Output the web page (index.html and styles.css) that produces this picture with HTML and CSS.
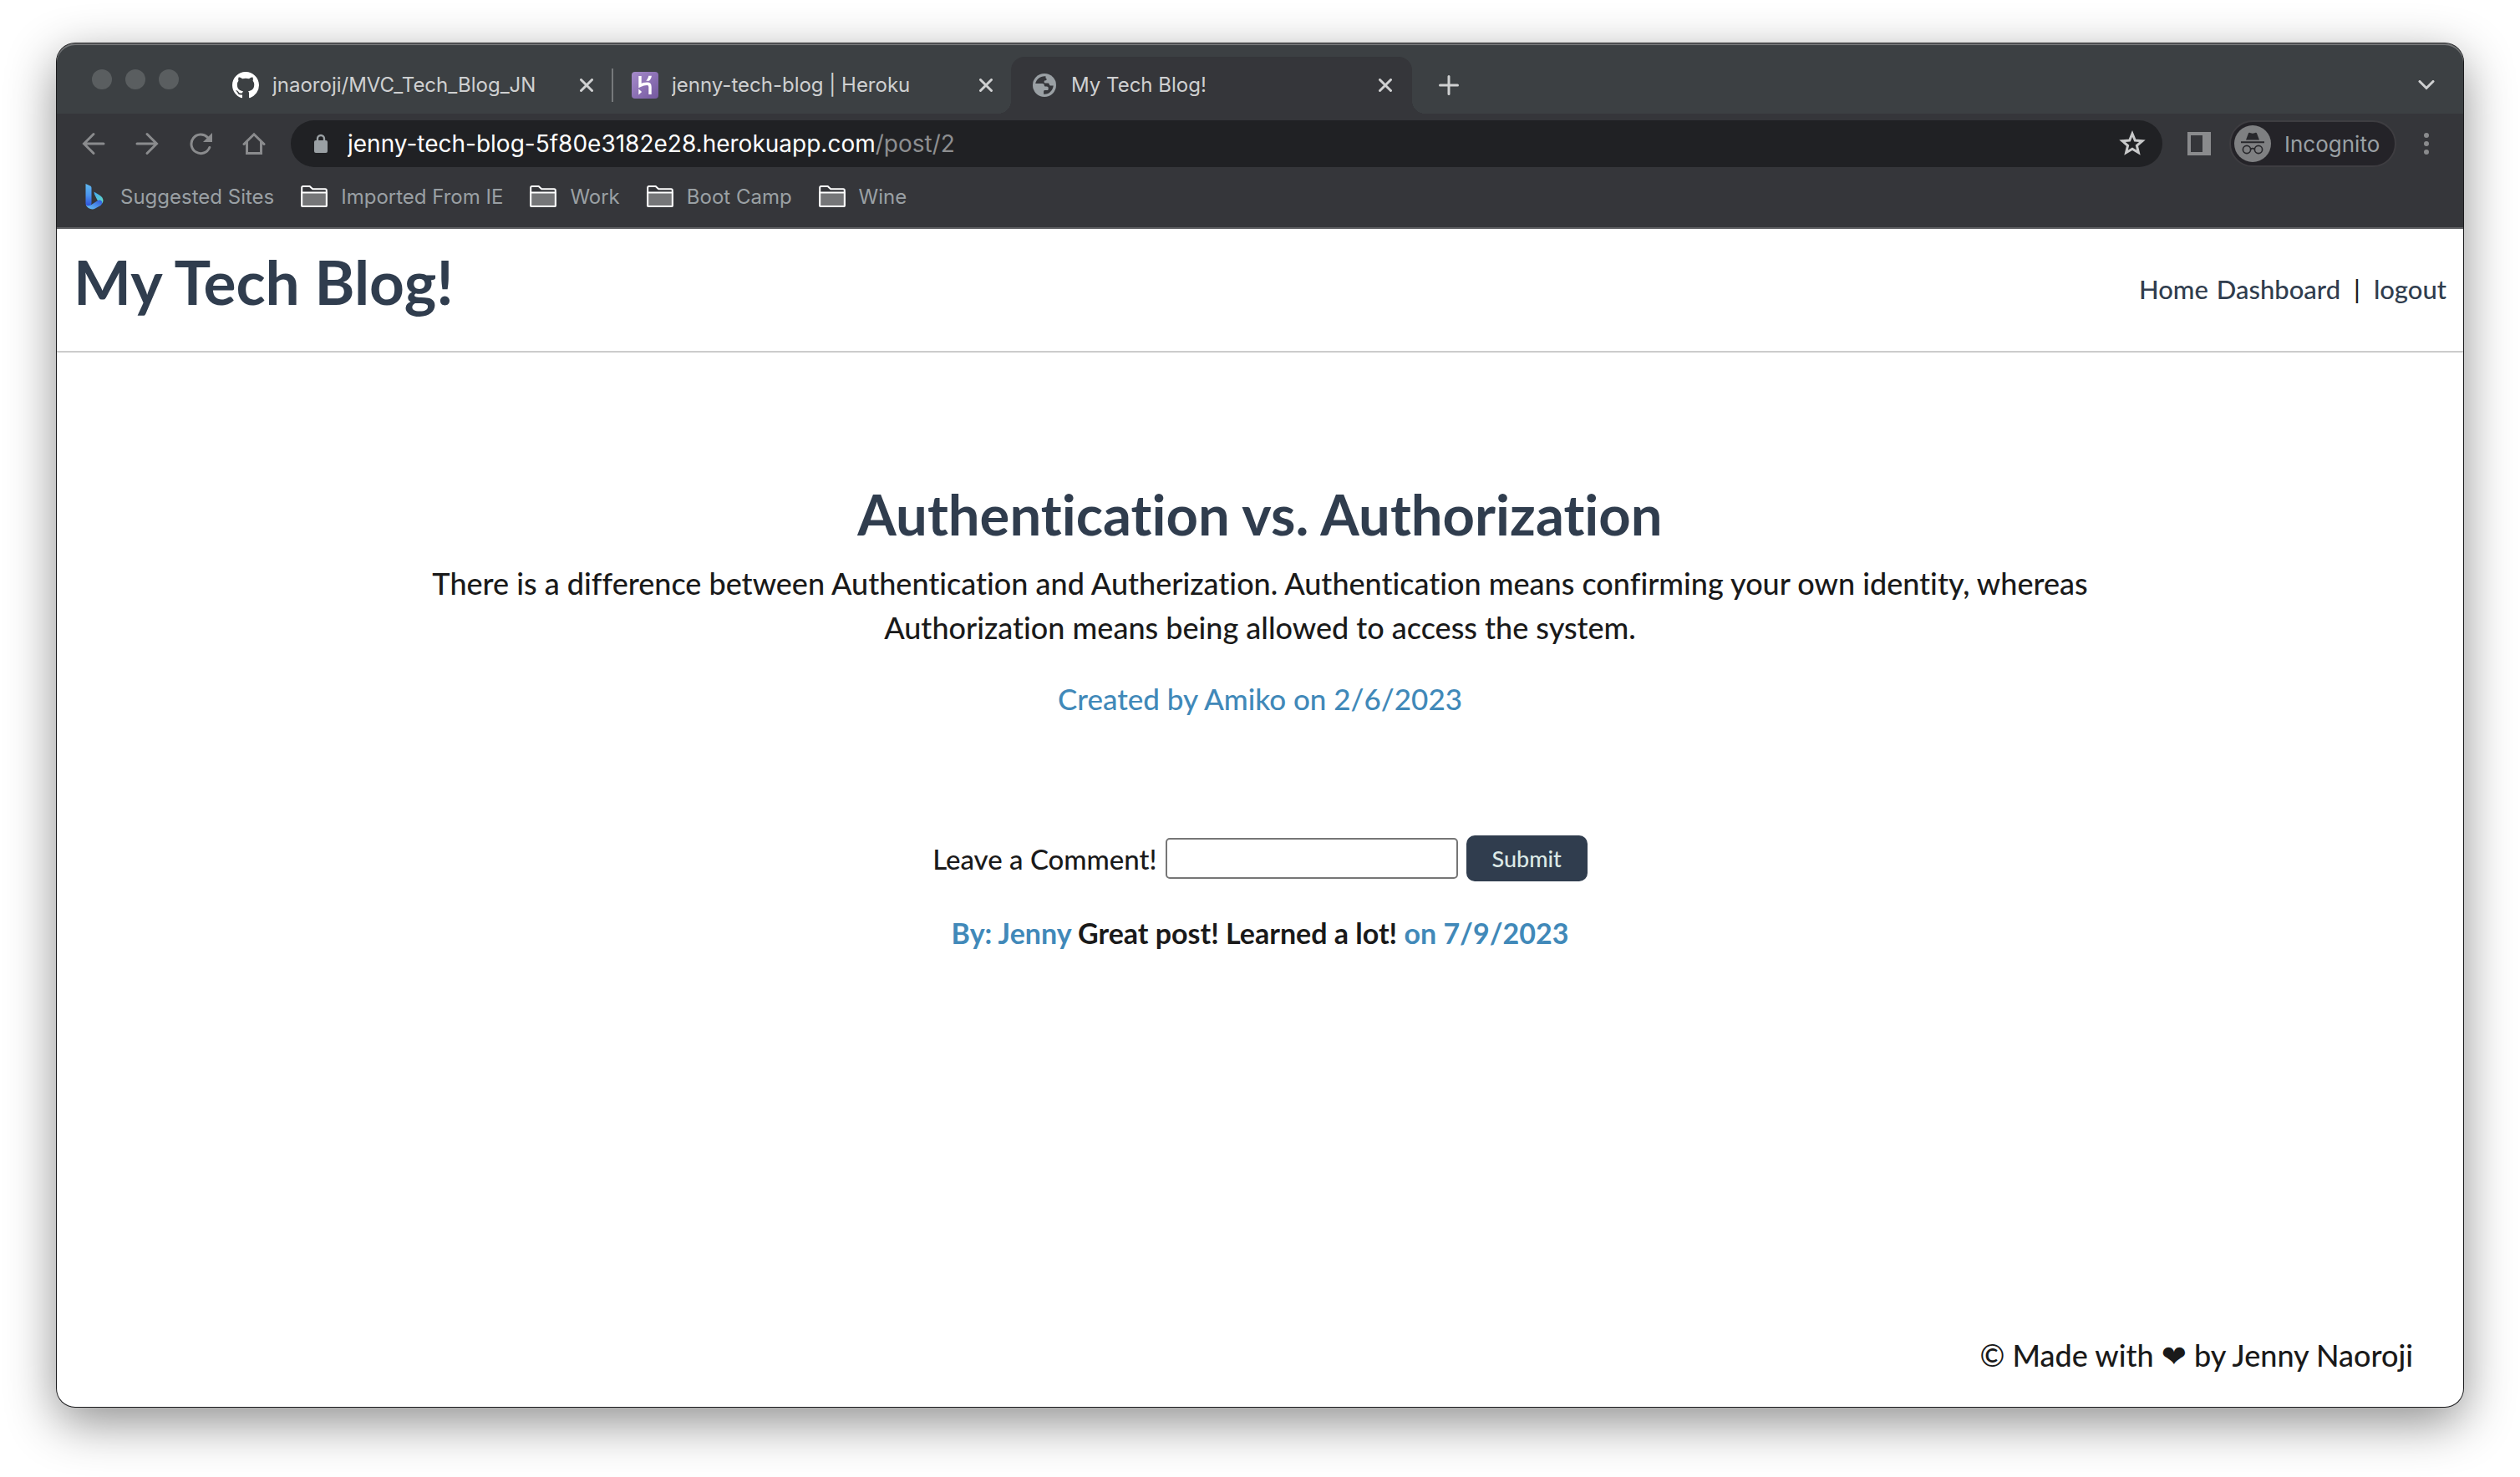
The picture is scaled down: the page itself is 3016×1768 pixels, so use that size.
FILE: index.html
```html
<!DOCTYPE html>
<html lang="en">
<head>
<meta charset="utf-8">
<title>My Tech Blog!</title>
<link rel="stylesheet" href="styles.css">
</head>
<body>
<div class="window">
  <div class="chrome">
    <div class="tabstrip">
      <div class="lights"><span class="light"></span><span class="light"></span><span class="light"></span></div>
      <div class="tab">
        <svg class="favicon" viewBox="0 0 16 16" aria-hidden="true"><path fill="#fff" d="M8 0C3.58 0 0 3.58 0 8c0 3.54 2.29 6.53 5.47 7.59.4.07.55-.17.55-.38 0-.19-.01-.82-.01-1.49-2.01.37-2.53-.49-2.69-.94-.09-.23-.48-.94-.82-1.13-.28-.15-.68-.52-.01-.53.63-.01 1.08.58 1.23.82.72 1.21 1.87.87 2.33.66.07-.52.28-.87.51-1.07-1.78-.2-3.64-.89-3.64-3.95 0-.87.31-1.59.82-2.15-.08-.2-.36-1.02.08-2.12 0 0 .67-.21 2.2.82.64-.18 1.32-.27 2-.27s1.36.09 2 .27c1.53-1.04 2.2-.82 2.2-.82.44 1.1.16 1.92.08 2.12.51.56.82 1.27.82 2.15 0 3.07-1.87 3.75-3.65 3.95.29.25.54.73.54 1.48 0 1.07-.01 1.93-.01 2.2 0 .21.15.46.55.38A8.01 8.01 0 0 0 16 8c0-4.42-3.58-8-8-8z"/></svg>
        <span class="tab-title">jnaoroji/MVC_Tech_Blog_JN</span>
        <button class="close" aria-label="Close tab"><svg width="16" height="16" viewBox="0 0 16 16"><path d="M1.500 1.500l13 13M14.500 1.500l-13 13"/></svg></button>
      </div>
      <span class="separator"></span>
      <div class="tab">
        <svg class="favicon" viewBox="0 0 32 32" aria-hidden="true">
          <defs><linearGradient id="heroku" x1="0" y1="0" x2="1" y2="1"><stop offset="0" stop-color="#a58bca"/><stop offset="1" stop-color="#74589f"/></linearGradient></defs>
          <rect width="32" height="32" rx="4" fill="url(#heroku)"/>
          <path d="M10 5v11.500c3-1.600 6-2.200 8.500-2.200 2.600 0 3.500 1.300 3.500 3.700v9" fill="none" stroke="#fff" stroke-width="3.400"/>
          <path d="M8.300 20.500v7l3.800-3.500zM20.300 4.800h3.600c-.3 2.300-1.300 4.200-3 6h-3.600c1.600-1.900 2.600-3.800 3-6z" fill="#fff"/>
        </svg>
        <span class="tab-title">jenny-tech-blog | Heroku</span>
        <button class="close" aria-label="Close tab"><svg width="16" height="16" viewBox="0 0 16 16"><path d="M1.500 1.500l13 13M14.500 1.500l-13 13"/></svg></button>
      </div>
      <div class="tab tab-active">
        <svg class="favicon" viewBox="0 0 32 32" aria-hidden="true">
          <circle cx="16" cy="16" r="14" fill="#9aa0a4"/>
          <path d="M17.500 5.200c-6.200-.6-11 3.400-12.300 8.800h8.300c1.500 0 2.300.8 2.300 2 0 1 .6 1.600 1.700 1.600h1.200c1.300 0 2 .9 2 2v.800c0 1.200-.6 1.700-1.600 1.700h-2.300c-1.200 0-1.700.5-1.700 1.600v3c6.500.6 11.200-4.600 11.600-10.200h-3.200c-1 0-1.600-.6-1.700-1.500-.2-1.100-.8-1.500-2.300-1.500h-2.400c-1 0-1.500-.6-1.500-1.500 0-1.100.7-1.700 1.700-1.700.9 0 1.300-.6 1.300-1.400 0-.7-.3-1.200-1.100-1.500z" fill="#35363a"/>
        </svg>
        <span class="tab-title">My Tech Blog!</span>
        <button class="close" aria-label="Close tab"><svg width="16" height="16" viewBox="0 0 16 16"><path d="M1.500 1.500l13 13M14.500 1.500l-13 13"/></svg></button>
      </div>
      <button class="new-tab" aria-label="New tab"><svg width="24" height="24" viewBox="0 0 24 24"><path d="M12 1.500v21M1.500 12h21"/></svg></button>
      <button class="tab-search" aria-label="Search tabs"><svg width="20" height="12" viewBox="0 0 20 12"><path d="M2 1.500l8 8 8-8"/></svg></button>
    </div>
    <div class="toolbar">
      <button class="tool" aria-label="Back"><svg width="28" height="28" viewBox="0 0 28 28"><path d="M26 14H3M14 2.500L2.500 14 14 25.500"/></svg></button>
      <button class="tool" aria-label="Forward"><svg width="28" height="28" viewBox="0 0 28 28"><path d="M2 14h23M14 2.500L25.500 14 14 25.500"/></svg></button>
      <button class="tool" aria-label="Reload"><svg width="28" height="28" viewBox="0 0 28 28"><path d="M22.500 6.500a11.300 11.300 0 1 0 2.300 12"/><path class="solid" d="M28 1v11H17z"/></svg></button>
      <button class="tool" aria-label="Home"><svg width="28" height="28" viewBox="0 0 28 28"><path d="M5.500 12v13.500h17V12M2 14.500L14 2.800l12 11.700"/></svg></button>
      <div class="omnibox">
        <svg class="lock" width="16" height="24" viewBox="0 0 16 24" aria-hidden="true"><rect y="8" width="16" height="15" rx="2" fill="#9aa0a4"/><path d="M4 9V6a4 4 0 0 1 8 0v3" fill="none" stroke="#9aa0a4" stroke-width="2.400"/></svg>
        <span class="url">jenny-tech-blog-5f80e3182e28.herokuapp.com<span class="path">/post/2</span></span>
        <button class="star" aria-label="Bookmark this tab"><svg width="32" height="32" viewBox="0 0 32 32"><path d="M16 4l3.300 8 8.700.7-6.600 5.600 2 8.400L16 22.200l-7.400 4.500 2-8.400L4 12.700l8.700-.7z"/></svg></button>
      </div>
      <button class="tool side-panel" aria-label="Side panel"><svg width="28" height="28" viewBox="0 0 28 28"><path class="solid" fill-rule="evenodd" d="M0 0h28v28H0zM4 4v20h14V4z"/></svg></button>
      <button class="profile">
        <svg width="44" height="44" viewBox="0 0 44 44" aria-hidden="true"><circle cx="22" cy="22" r="22" fill="#7f8082"/><path d="M14 17.500l3-8c.4-.8 1-.9 1.800-.6l3.200.8 3.200-.8c.8-.3 1.400-.2 1.800.6l3 8zM8 19.200h28v2H8z" fill="#28282c"/><g fill="none" stroke="#28282c" stroke-width="1.700"><circle cx="15" cy="29" r="4.600"/><circle cx="29" cy="29" r="4.600"/><path d="M19.500 28.500c1.600-1 3.400-1 5 0"/></g></svg>
        <span>Incognito</span>
      </button>
      <button class="tool menu" aria-label="Menu"><svg width="6" height="28" viewBox="0 0 6 28"><g class="solid"><circle cx="3" cy="4" r="3"/><circle cx="3" cy="14" r="3"/><circle cx="3" cy="24" r="3"/></g></svg></button>
    </div>
    <nav class="bookmarks" aria-label="Bookmarks">
      <a class="bookmark" href="#"><svg width="32" height="32" viewBox="0 0 32 32" aria-hidden="true">
        <defs><linearGradient id="stem" x1="0" y1="0" x2="0" y2="1"><stop offset="0" stop-color="#5fb8ee"/><stop offset=".5" stop-color="#4a94ee"/><stop offset="1" stop-color="#2b4bd8"/></linearGradient><linearGradient id="bowl" x1="0" y1="1" x2="1" y2="0"><stop offset="0" stop-color="#6cc9f5"/><stop offset="1" stop-color="#2d55dc"/></linearGradient><linearGradient id="leaf" x1="0" y1="0" x2="1" y2="1"><stop offset="0" stop-color="#44a4ee"/><stop offset="1" stop-color="#62e0c6"/></linearGradient></defs>
        <path d="M6.500 1l5 2.200c1.600.7 2 1.600 2 3V24c0 2.500-2 4.500-4 4.500s-3-2-3-4z" fill="url(#stem)"/>
        <path d="M16.500 10.500l6.500 4c3 1.700 4.500 4 4.500 7l-1 3-6-4-3.500-7z" fill="url(#leaf)"/>
        <path d="M6.800 26c1.500 1.800 4 1.500 6.200.2l8.500-5.400c2-1 5 .2 4.800 3-.2 2-1.500 3-2.800 3.800l-5.500 3c-4 2.200-9.500 0-11.200-4.600z" fill="url(#bowl)"/></svg><span>Suggested Sites</span></a>
      <a class="bookmark" href="#"><svg width="32" height="28" viewBox="0 0 32 28" aria-hidden="true"><path d="M1.200 25V3.500c0-1 .4-1.500 1.500-1.500h8l3.500 3.200h15c1 0 1.600.5 1.600 1.500V25c0 .7-.3 1-1 1H2.200c-.7 0-1-.3-1-1z" fill="#35363a" stroke="#fff" stroke-width="2"/><path d="M1.200 9.500h29.600V25c0 .7-.3 1-1 1H2.200c-.7 0-1-.3-1-1z" fill="#757678" stroke="#fff" stroke-width="2"/></svg><span>Imported From IE</span></a>
      <a class="bookmark" href="#"><svg width="32" height="28" viewBox="0 0 32 28" aria-hidden="true"><path d="M1.200 25V3.500c0-1 .4-1.500 1.500-1.500h8l3.500 3.200h15c1 0 1.600.5 1.600 1.500V25c0 .7-.3 1-1 1H2.200c-.7 0-1-.3-1-1z" fill="#35363a" stroke="#fff" stroke-width="2"/><path d="M1.200 9.500h29.600V25c0 .7-.3 1-1 1H2.200c-.7 0-1-.3-1-1z" fill="#757678" stroke="#fff" stroke-width="2"/></svg><span>Work</span></a>
      <a class="bookmark" href="#"><svg width="32" height="28" viewBox="0 0 32 28" aria-hidden="true"><path d="M1.200 25V3.500c0-1 .4-1.500 1.500-1.500h8l3.500 3.200h15c1 0 1.600.5 1.600 1.500V25c0 .7-.3 1-1 1H2.200c-.7 0-1-.3-1-1z" fill="#35363a" stroke="#fff" stroke-width="2"/><path d="M1.200 9.500h29.600V25c0 .7-.3 1-1 1H2.200c-.7 0-1-.3-1-1z" fill="#757678" stroke="#fff" stroke-width="2"/></svg><span>Boot Camp</span></a>
      <a class="bookmark" href="#"><svg width="32" height="28" viewBox="0 0 32 28" aria-hidden="true"><path d="M1.200 25V3.500c0-1 .4-1.500 1.500-1.500h8l3.500 3.200h15c1 0 1.600.5 1.600 1.500V25c0 .7-.3 1-1 1H2.200c-.7 0-1-.3-1-1z" fill="#35363a" stroke="#fff" stroke-width="2"/><path d="M1.200 9.500h29.600V25c0 .7-.3 1-1 1H2.200c-.7 0-1-.3-1-1z" fill="#757678" stroke="#fff" stroke-width="2"/></svg><span>Wine</span></a>
    </nav>
  </div>

  <div class="page">
    <header class="site-header">
      <h1>My Tech Blog!</h1>
      <nav class="site-nav"><a href="#">Home</a><a href="#">Dashboard</a><span class="bar">|</span><a href="#">logout</a></nav>
    </header>
    <main class="post">
      <h2>Authentication vs. Authorization</h2>
      <p class="body">There is a difference between Authentication and Autherization. Authentication means confirming your own identity, whereas Authorization means being allowed to access the system.</p>
      <p class="byline">Created by Amiko on 2/6/2023</p>
      <form class="comment-form">
        <label for="comment">Leave a Comment!</label>
        <input id="comment" type="text">
        <button type="button">Submit</button>
      </form>
      <p class="comment"><span class="meta">By: Jenny</span> Great post! Learned a lot! <span class="meta">on 7/9/2023</span></p>
    </main>
    <footer class="site-footer">© Made with <span class="heart">❤</span> by Jenny Naoroji</footer>
  </div>
</div>
</body>
</html>
```
FILE: styles.css
```css
* { box-sizing: border-box; }

body {
  margin: 0;
  min-height: 100vh;
  padding: 52px 68px 84px;
  display: flex;
  background: #fff;
  font-family: Lato, "Open Sans", sans-serif;
  font-weight: 500;
  font-variant-ligatures: none;
  color: #1a1a1a;
}

h1, h2, p { margin: 0; }
a { text-decoration: none; }
button { border: 0; padding: 0; background: none; font: inherit; color: inherit; }
svg { display: block; flex: none; }

.window {
  flex: 1;
  min-width: 0;
  display: flex;
  flex-direction: column;
  border-radius: 22px;
  background: #fff;
  box-shadow: 0 0 0 1px #1b1b1d, 0 18px 60px rgba(0, 0, 0, .45);
}

/* Browser frame */
.chrome {
  border-radius: 22px 22px 0 0;
  overflow: hidden;
  background: #35363a;
  border-bottom: 2px solid #5e5f62;
  font-family: Inter, "Liberation Sans", sans-serif;
  font-size: 24px;
  font-weight: 400;
  color: #9aa0a4;
}

.tabstrip {
  display: flex;
  align-items: flex-end;
  height: 84px;
  padding: 0 12px 0 42px;
  background: #3c4043;
  border-radius: 22px 22px 0 0;
  box-shadow: inset 0 2px 0 #737577;
  color: #cfd0d1;
}

.lights {
  display: flex;
  gap: 16px;
  align-self: flex-start;
  margin: 31px 40px 0 0;
}
.light { width: 24px; height: 24px; border-radius: 50%; background: #5a5e60; }

.tab {
  position: relative;
  flex: 0 1 478px;
  min-width: 0;
  height: 68px;
  display: flex;
  align-items: center;
  gap: 16px;
  padding: 0 16px 0 24px;
}
.tab-active { flex-basis: 480px; padding-right: 18px; border-radius: 16px 16px 0 0; background: #35363a; }
.tab-active::before,
.tab-active::after {
  content: "";
  position: absolute;
  bottom: 0;
  width: 16px;
  height: 16px;
}
.tab-active::before { right: 100%; background: radial-gradient(circle at 0 0, transparent 16px, #35363a 16px); }
.tab-active::after { left: 100%; background: radial-gradient(circle at 100% 0, transparent 16px, #35363a 16px); }

.favicon { width: 32px; height: 32px; }
.tab-title { flex: 1; min-width: 0; overflow: hidden; white-space: nowrap; line-height: 32px; }
.close { width: 28px; height: 28px; display: grid; place-items: center; }
.close path, .new-tab path, .tab-search path { fill: none; stroke: #cfd0d1; stroke-width: 3; stroke-linecap: round; }
.separator { width: 2px; height: 40px; margin: 0 -2px 14px 0; background: #76797b; }
.new-tab { width: 40px; height: 68px; margin-left: 24px; display: grid; place-items: center; }
.tab-search { width: 64px; height: 68px; margin-left: auto; display: grid; place-items: center; }

.toolbar { display: flex; align-items: center; height: 72px; padding: 0 12px; }
.tool { width: 64px; height: 56px; display: grid; place-items: center; }
.tool path { fill: none; stroke: #8a8b8d; stroke-width: 3; stroke-linecap: round; }
.tool path.solid, .tool .solid { fill: #8a8b8d; stroke: none; }

.omnibox {
  flex: 1;
  min-width: 0;
  height: 56px;
  margin: 0 12px;
  padding: 0 20px 0 28px;
  border-radius: 28px;
  display: flex;
  align-items: center;
  background: #202124;
}
.url { flex: 1; margin-left: 24px; font-size: 28px; color: #fff; white-space: nowrap; overflow: hidden; }
.path { color: #8d8e90; }
.star path { fill: none; stroke: #c8c9ca; stroke-width: 3; }

.profile {
  width: 200px;
  height: 56px;
  margin: 0 4px;
  padding-left: 4px;
  border: 2px solid #3e3d41;
  border-radius: 28px;
  display: flex;
  align-items: center;
  gap: 16px;
  background: #242328;
  font-size: 26px;
}

.bookmarks { display: flex; align-items: center; gap: 32px; height: 64px; padding: 0 28px 10px; }
.bookmark { display: flex; align-items: center; gap: 16px; color: #9aa0a4; white-space: nowrap; }

/* Blog page */
.page { flex: 1; display: flex; flex-direction: column; font-size: 33px; }

.site-header {
  display: flex;
  align-items: center;
  justify-content: space-between;
  height: 148px;
  padding: 0 20px 20px;
  border-bottom: 2px solid #ccc;
  color: #303d4e;
}
.site-header h1 { font-size: 73px; line-height: 88px; }
.site-nav { padding-top: 18px; font-size: 31px; }
.site-nav a { color: #303d4e; margin-left: 10px; }
.bar { margin: 0 6px 0 16px; color: #1a1a1a; }

.post {
  flex: 1;
  width: 100%;
  max-width: 2100px;
  margin: 0 auto;
  padding-top: 153px;
  text-align: center;
}
.post h2 { font-size: 67px; line-height: 80px; color: #303d4e; }
.body { margin-top: 17px; font-size: 36px; line-height: 53px; }
.byline { margin-top: 32px; font-size: 35px; line-height: 53px; color: #4189b9; }

.comment-form {
  display: flex;
  align-items: center;
  justify-content: center;
  gap: 10px;
  margin-top: 137px;
}
.comment-form input {
  width: 350px;
  height: 49px;
  padding: 2px 8px;
  border: 2px solid #767676;
  border-radius: 5px;
  font: inherit;
}
.comment-form button {
  height: 55px;
  padding: 0 31px;
  border-radius: 10px;
  background: #303d4e;
  color: #dce9e6;
  font-size: 27px;
}
.comment { margin-top: 38px; font-size: 34px; line-height: 48px; font-weight: 700; }
.meta { color: #4189b9; }

.site-footer { padding: 0 60px 36px; text-align: right; font-size: 36px; line-height: 48px; }
.heart { font-family: "DejaVu Sans", sans-serif; }
```
